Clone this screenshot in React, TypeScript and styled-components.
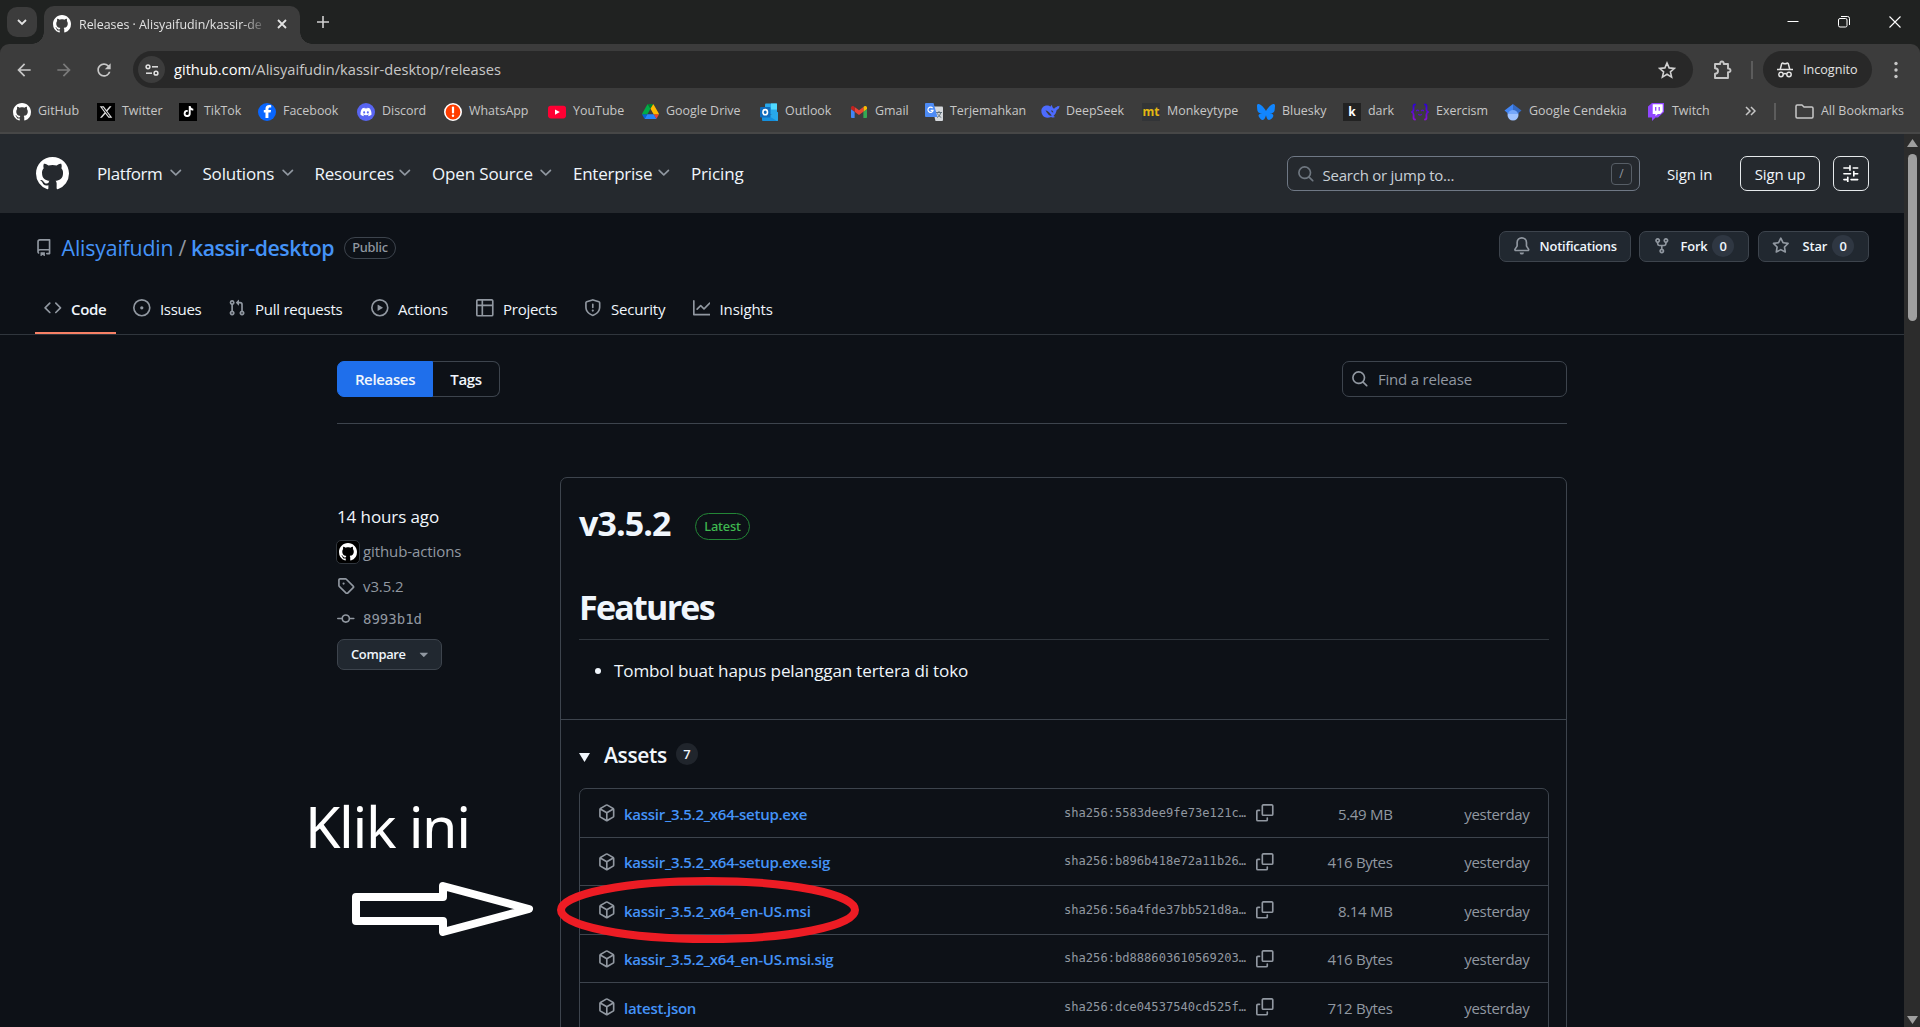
import React from "react";
import styled, { createGlobalStyle } from "styled-components";
import { FaXTwitter, FaTiktok, FaFacebookF, FaDiscord } from "react-icons/fa6";
import { MdArrowBack, MdArrowForward, MdRefresh } from "react-icons/md";

const c = {
  canvas: "#0d1117",
  text: "#f0f6fc",
  muted: "#9198a1",
  border: "#3d444d",
  borderMuted: "#30363d",
  link: "#4493f8",
  button: "#212830",
};

const Global = createGlobalStyle`
  * { box-sizing: border-box; }
  html, body { margin: 0; height: 100%; overflow: hidden; background: ${c.canvas}; }
  body { font-family: "Open Sans", "Noto Sans", sans-serif; color: ${c.text}; }
  svg { display: block; flex: none; }
`;

/* ---------- octicons ---------- */

const paths = {
  mark: "M8 0c4.42 0 8 3.58 8 8a8.013 8.013 0 0 1-5.45 7.59c-.4.08-.55-.17-.55-.38 0-.27.01-1.13.01-2.2 0-.75-.25-1.23-.54-1.48 1.78-.2 3.65-.88 3.65-3.95 0-.88-.31-1.59-.82-2.15.08-.2.36-1.02-.08-2.12 0 0-.67-.22-2.2.82-.64-.18-1.32-.27-2-.27-.68 0-1.36.09-2 .27-1.53-1.03-2.2-.82-2.2-.82-.44 1.1-.16 1.92-.08 2.12-.51.56-.82 1.28-.82 2.15 0 3.06 1.86 3.75 3.64 3.95-.23.2-.44.55-.51 1.07-.46.21-1.61.55-2.33-.66-.15-.24-.6-.83-1.23-.82-.67.01-.27.38.01.53.34.19.73.9.82 1.13.16.45.68 1.31 2.69.94 0 .67.01 1.3.01 1.49 0 .21-.15.45-.55.38A7.995 7.995 0 0 1 0 8c0-4.42 3.58-8 8-8Z",
  chevron: "M12.78 5.22a.749.749 0 0 1 0 1.06l-4.25 4.25a.749.749 0 0 1-1.06 0L3.22 6.28a.749.749 0 1 1 1.06-1.06L8 8.939l3.72-3.719a.749.749 0 0 1 1.06 0Z",
  search: "M10.68 11.74a6 6 0 0 1-7.922-8.982 6 6 0 0 1 8.982 7.922l3.04 3.04a.749.749 0 0 1-.326 1.275.749.749 0 0 1-.734-.215ZM11.5 7a4.499 4.499 0 1 0-8.997 0A4.499 4.499 0 0 0 11.5 7Z",
  sliders: "M15 2.75a.75.75 0 0 1-.75.75h-4a.75.75 0 0 1 0-1.5h4a.75.75 0 0 1 .75.75Zm-8.5.75v1.25a.75.75 0 0 0 1.5 0v-4a.75.75 0 0 0-1.5 0V2H1.75a.75.75 0 0 0 0 1.5H6.5Zm1.25 5.25a.75.75 0 0 0 0-1.5h-6a.75.75 0 0 0 0 1.5h6ZM15 8a.75.75 0 0 1-.75.75H11.5V10a.75.75 0 1 1-1.5 0V6a.75.75 0 0 1 1.5 0v1.25h2.75A.75.75 0 0 1 15 8Zm-9 5.25v-2a.75.75 0 0 0-1.5 0v1.25H1.75a.75.75 0 0 0 0 1.5H4.5v1.25a.75.75 0 0 0 1.5 0v-2Zm9 0a.75.75 0 0 1-.75.75h-6a.75.75 0 0 1 0-1.5h6a.75.75 0 0 1 .75.75Z",
  repo: "M2 2.5A2.5 2.5 0 0 1 4.5 0h8.75a.75.75 0 0 1 .75.75v12.5a.75.75 0 0 1-.75.75h-2.5a.75.75 0 0 1 0-1.5h1.75v-2h-8a1 1 0 0 0-.714 1.7.75.75 0 1 1-1.072 1.05A2.495 2.495 0 0 1 2 11.5Zm10.5-1h-8a1 1 0 0 0-1 1v6.708A2.486 2.486 0 0 1 4.5 9h8ZM5 12.25a.25.25 0 0 1 .25-.25h3.5a.25.25 0 0 1 .25.25v3.25a.25.25 0 0 1-.4.2l-1.45-1.087a.249.249 0 0 0-.3 0L5.4 15.7a.25.25 0 0 1-.4-.2Z",
  code: "m11.28 3.22 4.25 4.25a.75.75 0 0 1 0 1.06l-4.25 4.25a.749.749 0 0 1-1.275-.326.749.749 0 0 1 .215-.734L13.94 8l-3.72-3.72a.749.749 0 0 1 .326-1.275.749.749 0 0 1 .734.215Zm-6.56 0a.751.751 0 0 1 1.042.018.751.751 0 0 1 .018 1.042L2.06 8l3.72 3.72a.749.749 0 0 1-.326 1.275.749.749 0 0 1-.734-.215L.47 8.53a.75.75 0 0 1 0-1.06Z",
  issue: "M8 9.5a1.5 1.5 0 1 0 0-3 1.5 1.5 0 0 0 0 3ZM8 0a8 8 0 1 1 0 16A8 8 0 0 1 8 0ZM1.5 8a6.5 6.5 0 1 0 13 0 6.5 6.5 0 0 0-13 0Z",
  pull: "M1.5 3.25a2.25 2.25 0 1 1 3 2.122v5.256a2.251 2.251 0 1 1-1.5 0V5.372A2.25 2.25 0 0 1 1.5 3.25Zm5.677-.177L9.573.677A.25.25 0 0 1 10 .854V2.5h1A2.5 2.5 0 0 1 13.5 5v5.628a2.251 2.251 0 1 1-1.5 0V5a1 1 0 0 0-1-1h-1v1.646a.25.25 0 0 1-.427.177L7.177 3.427a.25.25 0 0 1 0-.354ZM3.75 2.5a.75.75 0 1 0 0 1.5.75.75 0 0 0 0-1.5Zm0 9.5a.75.75 0 1 0 0 1.5.75.75 0 0 0 0-1.5Zm8.25.75a.75.75 0 1 0 1.5 0 .75.75 0 0 0-1.5 0Z",
  play: "M8 0a8 8 0 1 1 0 16A8 8 0 0 1 8 0ZM1.5 8a6.5 6.5 0 1 0 13 0 6.5 6.5 0 0 0-13 0Zm4.879-2.773 4.264 2.559a.25.25 0 0 1 0 .428l-4.264 2.559A.25.25 0 0 1 6 10.559V5.442a.25.25 0 0 1 .379-.215Z",
  table: "M0 1.75C0 .784.784 0 1.75 0h12.5C15.216 0 16 .784 16 1.75v12.5A1.75 1.75 0 0 1 14.25 16H1.75A1.75 1.75 0 0 1 0 14.25ZM6.5 6.5v8h7.75a.25.25 0 0 0 .25-.25V6.5Zm8-1.5V1.75a.25.25 0 0 0-.25-.25H6.5V5Zm-13 1.5v7.75c0 .138.112.25.25.25H5v-8ZM5 5V1.5H1.75a.25.25 0 0 0-.25.25V5Z",
  shield: "M7.467.133a1.748 1.748 0 0 1 1.066 0l5.25 1.68A1.75 1.75 0 0 1 15 3.48V7c0 1.566-.32 3.182-1.303 4.682-.983 1.498-2.585 2.813-5.032 3.855a1.697 1.697 0 0 1-1.33 0c-2.447-1.042-4.049-2.357-5.032-3.855C1.32 10.182 1 8.566 1 7V3.48a1.75 1.75 0 0 1 1.217-1.667Zm.61 1.429a.25.25 0 0 0-.153 0l-5.25 1.68a.25.25 0 0 0-.174.238V7c0 1.358.275 2.666 1.057 3.86.784 1.194 2.121 2.34 4.366 3.297a.196.196 0 0 0 .154 0c2.245-.956 3.582-2.104 4.366-3.298C13.225 9.666 13.5 8.36 13.5 7V3.48a.251.251 0 0 0-.174-.237l-5.25-1.68ZM8.75 4.75v3a.75.75 0 0 1-1.5 0v-3a.75.75 0 0 1 1.5 0ZM9 10.5a1 1 0 1 1-2 0 1 1 0 0 1 2 0Z",
  graph: "M1.5 1.75V13.5h13.75a.75.75 0 0 1 0 1.5H.75a.75.75 0 0 1-.75-.75V1.75a.75.75 0 0 1 1.5 0Zm14.28 2.53-5.25 5.25a.75.75 0 0 1-1.06 0L7 7.06 4.28 9.78a.751.751 0 0 1-1.042-.018.751.751 0 0 1-.018-1.042l3.25-3.25a.75.75 0 0 1 1.06 0L10 7.94l4.72-4.72a.751.751 0 0 1 1.042.018.751.751 0 0 1 .018 1.042Z",
  bell: "M8 16a2 2 0 0 0 1.985-1.75c.017-.137-.097-.25-.235-.25h-3.5c-.138 0-.252.113-.235.25A2 2 0 0 0 8 16ZM3 5a5 5 0 0 1 10 0v2.947c0 .05.015.098.042.139l1.703 2.555A1.519 1.519 0 0 1 13.482 13H2.518a1.516 1.516 0 0 1-1.263-2.36l1.703-2.554A.255.255 0 0 0 3 7.947Zm5-3.5A3.5 3.5 0 0 0 4.5 5v2.947c0 .346-.102.683-.294.97l-1.703 2.556a.017.017 0 0 0-.003.01l.001.006c0 .002.002.004.004.006l.006.004.007.001h10.964l.007-.001.006-.004.004-.006.001-.007a.017.017 0 0 0-.003-.01l-1.703-2.554a1.745 1.745 0 0 1-.294-.97V5A3.5 3.5 0 0 0 8 1.5Z",
  fork: "M5 5.372v.878c0 .414.336.75.75.75h4.5a.75.75 0 0 0 .75-.75v-.878a2.25 2.25 0 1 1 1.5 0v.878a2.25 2.25 0 0 1-2.25 2.25h-1.5v2.128a2.251 2.251 0 1 1-1.5 0V8.5h-1.5A2.25 2.25 0 0 1 3.5 6.25v-.878a2.25 2.25 0 1 1 1.5 0ZM5 3.25a.75.75 0 1 0-1.5 0 .75.75 0 0 0 1.5 0Zm6.75.75a.75.75 0 1 0 0-1.5.75.75 0 0 0 0 1.5Zm-3 8.75a.75.75 0 1 0-1.5 0 .75.75 0 0 0 1.5 0Z",
  star: "M8 .25a.75.75 0 0 1 .673.418l1.882 3.815 4.21.612a.75.75 0 0 1 .416 1.279l-3.046 2.97.719 4.192a.751.751 0 0 1-1.088.791L8 12.347l-3.766 1.98a.75.75 0 0 1-1.088-.79l.72-4.194L.818 6.374a.75.75 0 0 1 .416-1.28l4.21-.611L7.327.668A.75.75 0 0 1 8 .25Zm0 2.445L6.615 5.5a.75.75 0 0 1-.564.41l-3.097.45 2.24 2.184a.75.75 0 0 1 .216.664l-.528 3.084 2.769-1.456a.75.75 0 0 1 .698 0l2.77 1.456-.53-3.084a.75.75 0 0 1 .216-.664l2.24-2.183-3.096-.45a.75.75 0 0 1-.564-.41L8 2.694Z",
  tag: "M1 7.775V2.75C1 1.784 1.784 1 2.75 1h5.025c.464 0 .91.184 1.238.513l6.25 6.25a1.75 1.75 0 0 1 0 2.474l-5.026 5.026a1.75 1.75 0 0 1-2.474 0l-6.25-6.25A1.752 1.752 0 0 1 1 7.775Zm1.5 0c0 .066.026.13.073.177l6.25 6.25a.25.25 0 0 0 .354 0l5.025-5.025a.25.25 0 0 0 0-.354l-6.25-6.25a.25.25 0 0 0-.177-.073H2.75a.25.25 0 0 0-.25.25ZM6 5a1 1 0 1 1 0 2 1 1 0 0 1 0-2Z",
  commit: "M11.93 8.5a4.002 4.002 0 0 1-7.86 0H.75a.75.75 0 0 1 0-1.5h3.32a4.002 4.002 0 0 1 7.86 0h3.32a.75.75 0 0 1 0 1.5Zm-1.43-.75a2.5 2.5 0 1 0-5 0 2.5 2.5 0 0 0 5 0Z",
  box: "m8.878.392 5.25 3.045c.54.314.872.89.872 1.514v6.098a1.75 1.75 0 0 1-.872 1.514l-5.25 3.045a1.75 1.75 0 0 1-1.756 0l-5.25-3.045A1.75 1.75 0 0 1 1 11.049V4.951c0-.624.332-1.201.872-1.514L7.122.392a1.75 1.75 0 0 1 1.756 0ZM7.875 1.69l-4.63 2.685L8 7.133l4.755-2.758-4.63-2.685a.248.248 0 0 0-.25 0ZM2.5 5.677v5.372c0 .09.047.171.125.216l4.625 2.683V8.432Zm6.25 8.271 4.625-2.683a.25.25 0 0 0 .125-.216V5.677L8.75 8.432Z",
  copy: "M0 6.75C0 5.784.784 5 1.75 5h1.5a.75.75 0 0 1 0 1.5h-1.5a.25.25 0 0 0-.25.25v7.5c0 .138.112.25.25.25h7.5a.25.25 0 0 0 .25-.25v-1.5a.75.75 0 0 1 1.5 0v1.5A1.75 1.75 0 0 1 9.25 16h-7.5A1.75 1.75 0 0 1 0 14.25ZM5 1.75C5 .784 5.784 0 6.75 0h7.5C15.216 0 16 .784 16 1.75v7.5A1.75 1.75 0 0 1 14.25 11h-7.5A1.75 1.75 0 0 1 5 9.25Zm1.75-.25a.25.25 0 0 0-.25.25v7.5c0 .138.112.25.25.25h7.5a.25.25 0 0 0 .25-.25v-7.5a.25.25 0 0 0-.25-.25Z",
  triangle: "m4.427 7.427 3.396 3.396a.25.25 0 0 0 .354 0l3.396-3.396A.25.25 0 0 0 11.396 7H4.604a.25.25 0 0 0-.177.427Z",
};

function Octicon({ name, size = 17.6, color = c.muted }: { name: keyof typeof paths; size?: number; color?: string }) {
  return (
    <svg width={size} height={size} viewBox="0 0 16 16" fill={color}>
      <path d={paths[name]} />
    </svg>
  );
}

/* ---------- browser chrome ---------- */

const Window = styled.div`
  display: flex;
  flex-direction: column;
  width: 1920px;
  height: 1027px;
  overflow: hidden;
  position: relative;
`;

const TabStrip = styled.div`
  display: flex;
  height: 44px;
  padding-left: 7px;
  background: #202221;
`;

const TabSearch = styled.div`
  display: grid;
  place-items: center;
  width: 30px;
  height: 30px;
  margin: 7px 7px 0 0;
  border-radius: 10px;
  background: #3c3c3c;
`;

const BrowserTab = styled.div`
  display: flex;
  align-items: center;
  width: 256px;
  height: 38px;
  margin-top: 6px;
  padding: 0 11px 2px 9px;
  border-radius: 10px 10px 0 0;
  background: #3c3c3c;
  position: relative;
  &::before, &::after {
    content: "";
    position: absolute;
    bottom: 0;
    width: 12px;
    height: 12px;
  }
  &::before { left: -12px; background: radial-gradient(circle at 0 0, transparent 11.5px, #3c3c3c 12px); }
  &::after { right: -12px; background: radial-gradient(circle at 100% 0, transparent 11.5px, #3c3c3c 12px); }
`;

const TabTitle = styled.div`
  width: 186px;
  margin-left: 8px;
  white-space: nowrap;
  font-size: 12.4px;
  color: #e3e3e3;
  mask-image: linear-gradient(to right, #000 162px, transparent 190px);
`;

const TabClose = styled.div`
  margin-left: auto;
`;

const NewTab = styled.div`
  margin: 15px 0 0 16px;
`;

const WindowButtons = styled.div`
  display: flex;
  align-items: center;
  gap: 39px;
  margin-left: auto;
  padding-right: 19px;
`;

const ChromeBody = styled.div`
  height: 90px;
  background: #202221;
  border-bottom: 2px solid #474747;
`;

const ChromeInner = styled.div`
  height: 88px;
  border-radius: 9px 9px 0 0;
  background: #3c3c3c;
`;

const Toolbar = styled.div`
  display: flex;
  align-items: center;
  height: 51px;
  padding: 0 17px 0 14px;
  color: #c7c7c7;
`;

const NavButton = styled.div<{ $dim?: boolean }>`
  width: 40px;
  opacity: ${(p) => (p.$dim ? 0.45 : 1)};
`;

const AddressBar = styled.div`
  display: flex;
  align-items: center;
  width: 1560px;
  height: 37px;
  margin-left: -1px;
  padding: 0 17px 0 5px;
  border-radius: 19px;
  background: #282828;
`;

const SiteInfo = styled.div`
  display: grid;
  place-items: center;
  width: 27px;
  height: 27px;
  border-radius: 50%;
  background: #3c3c3c;
`;

const Url = styled.div`
  flex: 1;
  margin-left: 9px;
  padding-bottom: 1px;
  font-size: 14.65px;
  color: #c7c7c7;
  & > span { color: #fff; }
`;

const ExtensionSlot = styled.div`
  margin-left: 19px;
`;

const ToolbarDivider = styled.div`
  width: 2px;
  height: 18px;
  margin-left: 18px;
  background: #5c5c5c;
`;

const Incognito = styled.div`
  display: flex;
  align-items: center;
  gap: 10px;
  width: 109px;
  height: 37px;
  margin: 0 auto 0 10px;
  padding-left: 14px;
  border-radius: 19px;
  background: #282828;
  font-size: 12.6px;
  color: #e3e3e3;
`;

const Bookmarks = styled.div`
  display: flex;
  align-items: center;
  height: 32px;
  padding-left: 13px;
  font-size: 12.45px;
  color: #c7c7c7;
`;

const Bookmark = styled.div<{ $w: number }>`
  display: flex;
  align-items: center;
  gap: 7px;
  width: ${(p) => p.$w}px;
  padding-bottom: 1px;
  white-space: nowrap;
  & > :first-child { position: relative; top: 1px; }
`;

const Favicon = styled.div<{ $bg?: string; $round?: boolean; $fg?: string }>`
  display: grid;
  place-items: center;
  flex: none;
  width: 18px;
  height: 18px;
  border-radius: ${(p) => (p.$round ? "50%" : "0")};
  background: ${(p) => p.$bg || "transparent"};
  color: ${(p) => p.$fg || "#fff"};
  font-size: 12px;
  font-weight: 700;
  line-height: 1;
`;

const MoreBookmarks = styled.div`
  width: 29px;
`;

const BookmarkDivider = styled.div`
  width: 2px;
  height: 17px;
  margin-right: 19px;
  background: #5c5c5c;
`;

function DriveIcon() {
  return (
    <svg width="17" height="15" viewBox="0 0 87.3 78">
      <path d="m6.6 66.85 3.85 6.65c.8 1.4 1.95 2.5 3.3 3.3l13.75-23.8h-27.5c0 1.55.4 3.1 1.2 4.5z" fill="#0066da" />
      <path d="m43.65 25-13.75-23.8c-1.35.8-2.5 1.9-3.3 3.3l-25.4 44a9.06 9.06 0 0 0-1.2 4.5h27.5z" fill="#00ac47" />
      <path d="m73.55 76.8c1.35-.8 2.5-1.9 3.3-3.3l1.6-2.75 7.65-13.25c.8-1.4 1.2-2.95 1.2-4.5h-27.5l5.85 11.5z" fill="#ea4335" />
      <path d="m43.65 25 13.75-23.8c-1.35-.8-2.9-1.2-4.5-1.2h-18.5c-1.6 0-3.15.45-4.5 1.2z" fill="#00832d" />
      <path d="m59.8 53h-32.3l-13.75 23.8c1.35.8 2.9 1.2 4.5 1.2h50.8c1.6 0 3.15-.45 4.5-1.2z" fill="#2684fc" />
      <path d="m73.4 26.5-12.7-22c-.8-1.4-1.95-2.5-3.3-3.3l-13.75 23.8 16.15 28h27.45c0-1.55-.4-3.1-1.2-4.5z" fill="#ffba00" />
    </svg>
  );
}

function OutlookIcon() {
  return (
    <svg width="18" height="18" viewBox="0 0 18 18">
      <rect x="5" y="0.5" width="12" height="11" rx="1" fill="#28a8ea" />
      <rect x="11" y="0.5" width="6" height="6" fill="#50d9ff" />
      <path d="M2 9l8 4.5L18 9v8a1 1 0 0 1-1 1H3a1 1 0 0 1-1-1z" fill="#1490df" />
      <path d="M18 9v8a1 1 0 0 1-1 1L8 12.5z" fill="#28a8ea" />
      <rect x="0" y="4" width="10.5" height="10.5" rx="1" fill="#0f6cbd" />
      <ellipse cx="5.2" cy="9.2" rx="2.3" ry="2.6" fill="none" stroke="#fff" strokeWidth="1.6" />
    </svg>
  );
}

function GmailIcon() {
  return (
    <svg width="16" height="12" viewBox="52 42 88 66">
      <path fill="#4285f4" d="M58 108h14V74L52 59v43c0 3.32 2.69 6 6 6" />
      <path fill="#34a853" d="M120 108h14c3.32 0 6-2.69 6-6V59l-20 15" />
      <path fill="#fbbc04" d="M120 48v26l20-15v-8c0-7.42-8.47-11.65-14.4-7.2" />
      <path fill="#ea4335" d="M72 74V48l24 18 24-18v26L96 92" />
      <path fill="#c5221f" d="M52 51v8l20 15V48l-5.6-4.2c-5.94-4.45-14.4-.22-14.4 7.2" />
    </svg>
  );
}

function TranslateIcon() {
  return (
    <svg width="18" height="18" viewBox="0 0 18 18">
      <path d="M7 3.5h10a1 1 0 0 1 1 1V17a1 1 0 0 1-1 1h-6.5z" fill="#d5d8dc" />
      <path d="M11 9.5h6M14 8v1.5M12 14.5c2-1 3.3-2.8 3.7-5M12.5 10.5c.7 1.7 2 3 3.8 4" stroke="#5f6f7a" strokeWidth="1" fill="none" />
      <path d="M1 0h7.5l4 14H1a1 1 0 0 1-1-1V1a1 1 0 0 1 1-1z" fill="#4d8bf5" />
      <path d="M7.6 5.2A2.6 2.6 0 1 0 8.1 7.3H5.6" stroke="#fff" strokeWidth="1.2" fill="none" />
    </svg>
  );
}

function DeepSeekIcon() {
  return (
    <svg width="19" height="15" viewBox="0 0 19 15">
      <path
        d="M.3 6.5C.6 3.5 3 1.300 6 1.400c1.500 0 2.500.5 3.700 1.200.3-.8.500-1.400 1.300-1.200.2 1.600 1 2.700 2.200 3.400.5-1.600 1.600-1 2.600-2 .6-.7 2-.6 2.700-1-.2 2-.8 3.600-2.800 4.200-.5 2.500-1.500 4.600-3.300 6 .6.400 1.200.7 1.700 1.100-1.500.8-3 .4-4-.2C6.500 14.400 3 13.700 1.500 11A7.500 7.500 0 0 1 .3 6.500z"
        fill="#4d6bfe"
      />
      <path d="M4.5 6.2c2.6.7 4.6 2.6 6.2 5.2-1.5.7-2.8-.2-3.7-1.5C6 8.700 5.200 7.600 4.500 6.200zM10.200 6.200c1.300.2 2 1 2.200 2.200-1.100.2-2-.6-2.200-2.200z" fill="#3c3c3c" />
    </svg>
  );
}

function BlueskyIcon() {
  return (
    <svg width="18" height="18" viewBox="0 0 24 24" fill="#1185fe">
      <path d="M12 10.8c-1.087-2.114-4.046-6.053-6.798-7.995C2.566.944 1.561 1.266.902 1.565.139 1.908 0 3.08 0 3.768c0 .69.378 5.65.624 6.479.815 2.736 3.713 3.66 6.383 3.364-3.912.58-7.387 2.005-2.83 7.078 5.013 5.19 6.87-1.113 7.823-4.308.953 3.195 2.05 9.271 7.733 4.308 4.267-4.308 1.172-6.498-2.74-7.078 2.67.297 5.568-.628 6.383-3.364.246-.828.624-5.79.624-6.478 0-.69-.139-1.861-.902-2.206-.659-.298-1.664-.62-4.3 1.24C16.046 4.748 13.087 8.687 12 10.8Z" />
    </svg>
  );
}

function ExercismIcon() {
  return (
    <svg width="18" height="18" viewBox="0 0 18 18" fill="none" strokeWidth="1.8" strokeLinecap="round">
      <defs>
        <linearGradient id="exercism" x1="0" y1="0" x2="0" y2="1">
          <stop offset="0" stopColor="#2e00d8" />
          <stop offset="1" stopColor="#8b0fd6" />
        </linearGradient>
      </defs>
      <path d="M4 1.5C2 1.5 2.6 4 2.6 6S2 8.600 1 9c1 .4 1.600 1 1.600 3S2 16.500 4 16.500M14 1.500c2 0 1.400 2.500 1.400 4.500S16 8.600 17 9c-1 .4-1.600 1-1.600 3s.6 4.500-1.400 4.500" stroke="url(#exercism)" />
      <path d="M5.5 7.8c.5-1 1.7-1 2.1 0M10.400 7.800c.5-1 1.700-1 2.100 0M7.600 11.500c.8.800 2 .800 2.800 0" stroke="#5a0bd0" strokeWidth="1.2" />
    </svg>
  );
}

function ScholarIcon() {
  return (
    <svg width="18" height="18" viewBox="0 0 18 18">
      <circle cx="9" cy="12" r="5.5" fill="#a0c3ff" />
      <path d="M4 9.5C5 7.700 6.800 6.500 9 6.500s4 1.200 5 3l.4 1.500H3.600z" fill="#76a7fa" />
      <path d="M9 1L.5 7.500 4 10.400C4.800 8.500 6.800 7 9 7z" fill="#4285f4" />
      <path d="M9 1l8.500 6.500L14 10.400C13.200 8.500 11.200 7 9 7z" fill="#356ac3" />
    </svg>
  );
}

function TwitchIcon() {
  return (
    <svg width="18" height="18" viewBox="0 0 18 18">
      <path d="M5 0L1 3.500v11h4V18l3.500-3.500H11l6-5.500V0z" fill="#9146ff" />
      <path d="M5.700 1.300h10v7.200l-2.400 2.400h-2.500l-2.300 2.200v-2.200H5.700z" fill="#fff" />
      <path d="M8.700 4v3.700M12.200 4v3.700" stroke="#9146ff" strokeWidth="1.3" />
    </svg>
  );
}

const bookmarks: { label: string; w: number; icon: React.ReactNode }[] = [
  { label: "GitHub", w: 84, icon: <Favicon><Octicon name="mark" size={18} color="#fff" /></Favicon> },
  { label: "Twitter", w: 82, icon: <Favicon $bg="#000" $fg="#ddd"><FaXTwitter size={14} /></Favicon> },
  { label: "TikTok", w: 79, icon: <Favicon $bg="#000"><FaTiktok size={11} /></Favicon> },
  { label: "Facebook", w: 99, icon: <Favicon $bg="#0866ff" $round><FaFacebookF size={13} /></Favicon> },
  { label: "Discord", w: 87, icon: <Favicon $bg="#5865f2" $round><FaDiscord size={12} /></Favicon> },
  {
    label: "WhatsApp", w: 104,
    icon: (
      <svg width="18" height="18" viewBox="0 0 18 18">
        <circle cx="9" cy="9" r="8.2" fill="#ff3d00" stroke="#fff" strokeWidth="1.6" />
        <path d="M9 4.500v5" stroke="#fff" strokeWidth="2.2" strokeLinecap="round" />
        <circle cx="9" cy="12.8" r="1.2" fill="#fff" />
      </svg>
    ),
  },
  {
    label: "YouTube", w: 93,
    icon: (
      <svg width="18" height="18" viewBox="0 0 18 18">
        <rect y="2.8" width="18" height="12.6" rx="2.8" fill="#ff0033" />
        <path d="M7 6.400v5.400l4.800-2.700z" fill="#fff" />
      </svg>
    ),
  },
  { label: "Google Drive", w: 119, icon: <Favicon><DriveIcon /></Favicon> },
  { label: "Outlook", w: 90, icon: <OutlookIcon /> },
  { label: "Gmail", w: 75, icon: <Favicon><GmailIcon /></Favicon> },
  { label: "Terjemahkan", w: 116, icon: <TranslateIcon /> },
  { label: "DeepSeek", w: 101, icon: <Favicon><DeepSeekIcon /></Favicon> },
  { label: "Monkeytype", w: 115, icon: <Favicon $bg="#323437" $fg="#e2b714">mt</Favicon> },
  { label: "Bluesky", w: 86, icon: <BlueskyIcon /> },
  { label: "dark", w: 68, icon: <Favicon $bg="#222"><span>k</span></Favicon> },
  { label: "Exercism", w: 93, icon: <ExercismIcon /> },
  { label: "Google Cendekia", w: 143, icon: <ScholarIcon /> },
  { label: "Twitch", w: 98, icon: <TwitchIcon /> },
];

/* ---------- page ---------- */

const Viewport = styled.div`
  display: flex;
  flex: 1;
  min-height: 0;
`;

const Page = styled.div`
  flex: 1;
  min-width: 0;
  overflow: hidden;
  background: ${c.canvas};
`;

const ScrollTrack = styled.div`
  display: flex;
  flex-direction: column;
  align-items: center;
  width: 16px;
  padding: 5px 0 3px;
  background: #2c2c2c;
`;

const ScrollThumb = styled.div`
  width: 9px;
  height: 167px;
  margin: 7px 0 auto 1px;
  border-radius: 5px;
  background: #9f9f9f;
`;

const SiteHeader = styled.header`
  display: flex;
  align-items: center;
  height: 79px;
  padding: 0 35px 0 36px;
  background: #25292e;
  & > svg { margin-top: -1px; }
`;

const SiteNav = styled.nav`
  display: flex;
  flex: 1;
  margin-left: 28px;
`;

const SiteNavItem = styled.div<{ $w?: number; $ls: number }>`
  display: flex;
  align-items: center;
  justify-content: space-between;
  width: ${(p) => (p.$w ? p.$w + "px" : "auto")};
  padding-right: 18px;
  padding-bottom: 1px;
  font-size: 17px;
  letter-spacing: ${(p) => p.$ls}px;
  white-space: nowrap;
`;

const SearchBox = styled.div`
  display: flex;
  align-items: center;
  width: 353px;
  height: 35px;
  padding: 0 7px 0 9px;
  border: 1px solid #6f7885;
  border-radius: 7px;
`;

const SearchHint = styled.span`
  flex: 1;
  margin: 2px 0 0 8px;
  font-size: 15px;
  letter-spacing: -0.25px;
  color: #c9d0d7;
`;

const KeyCap = styled.span`
  display: grid;
  place-items: center;
  width: 21px;
  height: 22px;
  border: 1px solid #575e66;
  border-radius: 4px;
  font-size: 12px;
  color: #9198a1;
`;

const SignIn = styled.a`
  width: 100px;
  padding-left: 27px;
  font-size: 15px;
  letter-spacing: -0.15px;
  white-space: nowrap;
`;

const OutlineButton = styled.a<{ $w: number }>`
  display: grid;
  place-items: center;
  width: ${(p) => p.$w}px;
  height: 35px;
  border: 1px solid #e6e9ec;
  border-radius: 7px;
  font-size: 15px;
  letter-spacing: -0.15px;
  & + & { margin-left: 13px; }
`;

const RepoHeader = styled.div`
  display: flex;
  align-items: center;
  height: 69px;
  padding: 0 35px 0 35px;
`;

const RepoName = styled.div`
  display: flex;
  align-items: baseline;
  margin-left: 9px;
  font-size: 21.3px;
  letter-spacing: -0.18px;
  color: ${c.link};
`;

const Slash = styled.span`
  margin: 0 5px 0 5px;
  color: ${c.muted};
`;

const RepoBold = styled.strong`
  font-weight: 600;
  letter-spacing: -0.5px;
`;

const PublicSlot = styled.div`
  margin-left: 10px;
`;

const Pill = styled.span<{ $latest?: boolean }>`
  display: grid;
  place-items: center;
  height: ${(p) => (p.$latest ? 27 : 22)}px;
  width: ${(p) => (p.$latest ? 55 : 52)}px;
  padding-bottom: ${(p) => (p.$latest ? 1 : 0)}px;
  border: 1px solid ${(p) => (p.$latest ? "#238636" : c.border)};
  border-radius: 14px;
  font-family: "Noto Sans", sans-serif;
  font-size: 12.8px;
  font-weight: 500;
  letter-spacing: -0.2px;
  line-height: 17px;
  color: ${(p) => (p.$latest ? "#3fb950" : c.muted)};
`;

const RepoActions = styled.div`
  display: flex;
  margin-left: auto;
  padding-bottom: 2px;
`;

const ActionButton = styled.div<{ $w: number; $gap: number; $ml?: number }>`
  display: flex;
  align-items: center;
  width: ${(p) => p.$w}px;
  height: 31px;
  margin-left: ${(p) => p.$ml || 0}px;
  padding: 0 14px 1px 13px;
  border: 1px solid ${c.border};
  border-radius: 7px;
  background: ${c.button};
  font-size: 12.9px;
  font-weight: 600;
  letter-spacing: -0.2px;
  & > svg { margin-right: ${(p) => p.$gap}px; margin-top: 0; }
`;

const Counter = styled.span<{ $bg?: string }>`
  display: grid;
  place-items: center;
  min-width: 22px;
  height: 22px;
  margin-left: auto;
  border-radius: 11px;
  background: ${(p) => p.$bg || "#2f3742"};
  font-size: 12.9px;
  font-weight: 600;
`;

const RepoTabs = styled.nav`
  display: flex;
  gap: 0;
  height: 53px;
  padding-left: 35px;
  border-bottom: 1px solid ${c.borderMuted};
`;

const RepoTab = styled.div<{ $w: number; $active?: boolean; $ls: number }>`
  width: ${(p) => p.$w}px;
  font-size: 15px;
  font-weight: ${(p) => (p.$active ? 600 : 400)};
  letter-spacing: ${(p) => p.$ls}px;
`;

const RepoTabInner = styled.div<{ $active?: boolean }>`
  display: flex;
  align-items: center;
  gap: 9.4px;
  width: ${(p) => (p.$active ? "81px" : "auto")};
  height: 52px;
  padding: 4px 0 0 9px;
  border-bottom: 2px solid ${(p) => (p.$active ? "#f78166" : "transparent")};
  white-space: nowrap;
  & > svg { margin-top: -2px; }
`;

const Content = styled.main`
  width: 1230px;
  margin-left: 337px;
`;

const Subnav = styled.div`
  display: flex;
  justify-content: space-between;
  padding: 26px 0;
  border-bottom: 1px solid ${c.border};
`;

const Segmented = styled.div`
  display: flex;
  font-size: 15px;
  font-weight: 600;
  letter-spacing: -0.35px;
`;

const Segment = styled.div<{ $w: number; $active?: boolean }>`
  display: grid;
  place-items: center;
  width: ${(p) => p.$w}px;
  height: 36px;
  border: 1px solid ${(p) => (p.$active ? "#1f6feb" : c.border)};
  border-left-width: ${(p) => (p.$active ? 1 : 0)}px;
  border-radius: ${(p) => (p.$active ? "7px 0 0 7px" : "0 7px 7px 0")};
  background: ${(p) => (p.$active ? "#1f6feb" : "transparent")};
`;

const FindBox = styled.div`
  display: flex;
  align-items: center;
  gap: 9.4px;
  width: 225px;
  height: 36px;
  padding-left: 8px;
  border: 1px solid ${c.border};
  border-radius: 7px;
  font-size: 15px;
  letter-spacing: -0.2px;
  color: ${c.muted};
`;

const Release = styled.div`
  display: flex;
  margin-top: 53px;
`;

const Meta = styled.aside`
  width: 223px;
  padding-top: 25px;
`;

const PublishedAt = styled.div`
  height: 30px;
  line-height: 30px;
  font-size: 17px;
  letter-spacing: -0.1px;
`;

const MetaRow = styled.div<{ $h: number; $mono?: boolean }>`
  display: flex;
  align-items: center;
  gap: 8.4px;
  height: ${(p) => p.$h}px;
  padding-top: ${(p) => (p.$mono ? 2 : 0)}px;
  font-family: ${(p) => (p.$mono ? '"DejaVu Sans Mono", monospace' : "inherit")};
  font-size: ${(p) => (p.$mono ? 14 : 15)}px;
  letter-spacing: ${(p) => (p.$mono ? 0 : -0.1)}px;
  color: ${c.muted};
`;

const Avatar = styled.span`
  display: grid;
  place-items: center;
  width: 24px;
  height: 24px;
  margin: 2px -5.4px 0 -1px;
  border: 1px solid #30363d;
  border-radius: 5px;
  background: #000;
`;

const CompareButton = styled.div`
  display: flex;
  align-items: center;
  gap: 9px;
  width: 105px;
  height: 31px;
  margin-top: 5px;
  padding: 0 0 1px 13px;
  border: 1px solid ${c.border};
  border-radius: 7px;
  background: ${c.button};
  font-size: 12.9px;
  font-weight: 600;
  letter-spacing: -0.3px;
`;

const Card = styled.section`
  width: 1007px;
  height: 700px;
  border: 1px solid ${c.border};
  border-radius: 7px;
`;

const ReleaseNotes = styled.div`
  height: 242px;
  padding: 19px 17px 0 18px;
  border-bottom: 1px solid ${c.border};
`;

const TitleRow = styled.div`
  display: flex;
  align-items: center;
  gap: 23px;
  height: 52px;
`;

const Version = styled.h1`
  width: 93px;
  margin: 0;
  white-space: nowrap;
  font-size: 34px;
  font-weight: 700;
  letter-spacing: -0.9px;
`;

const PillSlot = styled.div`
  padding-top: 7px;
`;

const NotesHeading = styled.h2`
  display: flex;
  align-items: center;
  height: 65px;
  margin: 26px 0 0;
  border-bottom: 1px solid ${c.borderMuted};
  font-size: 34px;
  font-weight: 700;
  letter-spacing: -1.75px;
`;

const NotesList = styled.ul`
  margin: 17px 0 0;
  padding-left: 35px;
  font-size: 17.1px;
  line-height: 27px;
  letter-spacing: -0.16px;
`;

const Assets = styled.div`
  padding: 0 17px 0 18px;
`;

const AssetsTitle = styled.div`
  display: flex;
  align-items: center;
  height: 68px;
  padding-top: 1px;
  font-size: 21px;
  font-weight: 600;
  letter-spacing: -0.35px;
  & > svg { margin: 5px 14px 0 0; }
`;

const CounterSlot = styled.span`
  margin: -1px 0 0 9px;
`;

const AssetList = styled.div`
  border: 1px solid ${c.border};
  border-radius: 7px 7px 0 0;
`;

const AssetRow = styled.div`
  display: flex;
  align-items: center;
  height: 48.5px;
  padding: 2px 18px 0 18px;
  border-bottom: 1px solid ${c.border};
  font-size: 15px;
  & > svg { margin-top: -1px; }
`;

const AssetName = styled.a`
  width: 440px;
  margin-left: 8.4px;
  font-weight: 600;
  letter-spacing: -0.26px;
  color: ${c.link};
`;

const Digest = styled.span`
  width: 192px;
  margin-top: -2px;
  font-family: "DejaVu Sans Mono", monospace;
  font-size: 12.1px;
  color: ${c.muted};
`;

const AssetCell = styled.span<{ $w: number }>`
  width: ${(p) => p.$w}px;
  text-align: right;
  letter-spacing: -0.3px;
  color: ${c.muted};
`;

/* ---------- hand-drawn annotations over the page ---------- */

const NoteText = styled.div`
  position: absolute;
  left: 305px;
  top: 786px;
  font-family: "Noto Sans", sans-serif;
  font-size: 57.4px;
  line-height: 80px;
  letter-spacing: -1.4px;
  color: #fff;
  white-space: nowrap;
`;

const NoteMarks = styled.svg`
  position: absolute;
  left: 340px;
  top: 870px;
`;

const assets = [
  ["kassir_3.5.2_x64-setup.exe", "sha256:5583dee9fe73e121c…", "5.49 MB"],
  ["kassir_3.5.2_x64-setup.exe.sig", "sha256:b896b418e72a11b26…", "416 Bytes"],
  ["kassir_3.5.2_x64_en-US.msi", "sha256:56a4fde37bb521d8a…", "8.14 MB"],
  ["kassir_3.5.2_x64_en-US.msi.sig", "sha256:bd888603610569203…", "416 Bytes"],
  ["latest.json", "sha256:dce04537540cd525f…", "712 Bytes"],
];

const siteNav: [string, number, number][] = [
  ["Platform", 105.5, -0.4],
  ["Solutions", 112, -0.2],
  ["Resources", 117.5, -0.25],
  ["Open Source", 141, -0.15],
  ["Enterprise", 118, -0.25],
  ["Pricing", 0, -0.15],
];

const repoTabs: [string, keyof typeof paths, number, number][] = [
  ["Code", "code", 89, -0.3],
  ["Issues", "issue", 95, -0.3],
  ["Pull requests", "pull", 143, -0.25],
  ["Actions", "play", 105, -0.2],
  ["Projects", "table", 108, -0.25],
  ["Security", "shield", 108.5, -0.2],
  ["Insights", "graph", 110, -0.1],
];

function Chrome() {
  return (
    <>
      <TabStrip>
        <TabSearch>
          <svg width="10" height="7" viewBox="0 0 10 7" fill="none" stroke="#e3e3e3" strokeWidth="1.8"><path d="M1 1l4 4 4-4" /></svg>
        </TabSearch>
        <BrowserTab>
          <Octicon name="mark" size={18} color="#fff" />
          <TabTitle>Releases · Alisyaifudin/kassir-de</TabTitle>
          <TabClose>
            <svg width="14" height="10" viewBox="0 0 14 10" stroke="#e3e3e3" strokeWidth="1.8"><path d="M3 1l8 8M11 1L3 9" /></svg>
          </TabClose>
        </BrowserTab>
        <NewTab>
          <svg width="14" height="14" viewBox="0 0 14 14" stroke="#d0d0d0" strokeWidth="1.6"><path d="M7 1v12M1 7h12" /></svg>
        </NewTab>
        <WindowButtons>
          <svg width="12" height="12" viewBox="0 0 12 12" stroke="#fff"><path d="M.5 5.500h11" /></svg>
          <svg width="12" height="12" viewBox="0 0 12 12" fill="none" stroke="#fff"><rect x=".5" y="2.5" width="8.5" height="8.5" rx="1.5" /><path d="M3 .5h6.500a2 2 0 0 1 2 2V9" /></svg>
          <svg width="12" height="12" viewBox="0 0 12 12" stroke="#fff" strokeWidth="1.1"><path d="M.5 .5l11 11M11.500 .5l-11 11" /></svg>
        </WindowButtons>
      </TabStrip>
      <ChromeBody>
        <ChromeInner>
          <Toolbar>
            <NavButton><MdArrowBack size={20} /></NavButton>
            <NavButton $dim><MdArrowForward size={20} /></NavButton>
            <NavButton><MdRefresh size={20} /></NavButton>
            <AddressBar>
              <SiteInfo>
                <svg width="14" height="12" viewBox="0 0 14 12" fill="none" stroke="#e3e3e3" strokeWidth="1.5">
                  <circle cx="3" cy="2.8" r="1.9" /><path d="M7 2.800h6" />
                  <circle cx="11" cy="9.2" r="1.9" /><path d="M1 9.200h6" />
                </svg>
              </SiteInfo>
              <Url><span>github.com</span>/Alisyaifudin/kassir-desktop/releases</Url>
              <svg width="18" height="18" viewBox="0 0 18 18" fill="none" stroke="#d0d0d0" strokeWidth="1.6"><path d="M9 2l2.100 4.900 5.300.5-4 3.500 1.200 5.200L9 13.300l-4.600 2.800 1.200-5.200-4-3.500 5.300-.5z" /></svg>
            </AddressBar>
            <ExtensionSlot>
              <svg width="21" height="20" viewBox="0 0 21 20" fill="none" stroke="#c7c7c7" strokeWidth="1.9" strokeLinejoin="round">
                <path d="M3 4h5.200c-.3-1.600.6-2.500 1.700-2.500S12 2.400 11.700 4H16v4.600c1.600-.2 2.500.7 2.500 1.800s-.9 2-2.500 1.800V18H3v-4.300c2.200 0 3-1.300 3-2.700S5.200 8.200 3 8.200z" />
              </svg>
            </ExtensionSlot>
            <ToolbarDivider />
            <Incognito>
              <svg width="16" height="16" viewBox="0 0 16 16" fill="none" stroke="#e3e3e3" strokeWidth="1.5">
                <path d="M0 7.500h16M3.300 7l1.400-5.200c.2-.7.800-.8 1.300-.6 1.300.6 2.700.6 4 0 .5-.2 1.100-.1 1.300.6L12.700 7" />
                <circle cx="4" cy="12.5" r="2.2" /><circle cx="12" cy="12.5" r="2.2" /><path d="M6.200 12.300c1-.8 2.600-.8 3.600 0" />
              </svg>
              Incognito
            </Incognito>
            <svg width="14" height="18" viewBox="0 0 14 18" fill="#c7c7c7"><circle cx="7" cy="2.5" r="1.7" /><circle cx="7" cy="9" r="1.7" /><circle cx="7" cy="15.5" r="1.7" /></svg>
          </Toolbar>
          <Bookmarks>
            {bookmarks.map((b) => (
              <Bookmark key={b.label} $w={b.w}>{b.icon}{b.label}</Bookmark>
            ))}
            <MoreBookmarks>
              <svg width="11" height="10" viewBox="0 0 11 10" fill="none" stroke="#c7c7c7" strokeWidth="1.5"><path d="M1 1l4 4-4 4M6 1l4 4-4 4" /></svg>
            </MoreBookmarks>
            <BookmarkDivider />
            <Bookmark $w={112}>
              <svg width="19" height="15" viewBox="0 0 19 15" fill="none" stroke="#c7c7c7" strokeWidth="1.5" strokeLinejoin="round"><path d="M1 12.800V2.200c0-.7.500-1.200 1.200-1.200h4.800l2 2h7.800c.7 0 1.200.5 1.200 1.200v8.600c0 .7-.5 1.200-1.200 1.200H2.200c-.7 0-1.200-.5-1.200-1.200z" /></svg>
              All Bookmarks
            </Bookmark>
          </Bookmarks>
        </ChromeInner>
      </ChromeBody>
    </>
  );
}

export default function App() {
  return (
    <Window>
      <Global />
      <Chrome />
      <Viewport>
        <Page>
          <SiteHeader>
            <Octicon name="mark" size={33} color="#fff" />
            <SiteNav>
              {siteNav.map(([label, w, ls]) => (
                <SiteNavItem key={label} $w={w} $ls={ls}>
                  {label}
                  {w > 0 && <Octicon name="chevron" />}
                </SiteNavItem>
              ))}
            </SiteNav>
            <SearchBox>
              <Octicon name="search" color="#6f7780" />
              <SearchHint>Search or jump to...</SearchHint>
              <KeyCap>/</KeyCap>
            </SearchBox>
            <SignIn>Sign in</SignIn>
            <OutlineButton $w={80}>Sign up</OutlineButton>
            <OutlineButton $w={36}><Octicon name="sliders" color="#fff" /></OutlineButton>
          </SiteHeader>
          <RepoHeader>
            <Octicon name="repo" />
            <RepoName>Alisyaifudin<Slash>/</Slash><RepoBold>kassir-desktop</RepoBold></RepoName>
            <PublicSlot><Pill>Public</Pill></PublicSlot>
            <RepoActions>
              <ActionButton $w={132} $gap={9}><Octicon name="bell" />Notifications</ActionButton>
              <ActionButton $w={110} $gap={10} $ml={8}><Octicon name="fork" />Fork<Counter>0</Counter></ActionButton>
              <ActionButton $w={111} $gap={13} $ml={9}><Octicon name="star" />Star<Counter>0</Counter></ActionButton>
            </RepoActions>
          </RepoHeader>
          <RepoTabs>
            {repoTabs.map(([label, icon, w, ls], i) => (
              <RepoTab key={label} $w={w} $ls={ls} $active={i === 0}>
                <RepoTabInner $active={i === 0}><Octicon name={icon} />{label}</RepoTabInner>
              </RepoTab>
            ))}
          </RepoTabs>
          <Content>
            <Subnav>
              <Segmented>
                <Segment $w={96} $active>Releases</Segment>
                <Segment $w={67}>Tags</Segment>
              </Segmented>
              <FindBox><Octicon name="search" />Find a release</FindBox>
            </Subnav>
            <Release>
              <Meta>
                <PublishedAt>14 hours ago</PublishedAt>
                <MetaRow $h={38}><Avatar><Octicon name="mark" size={18} color="#fff" /></Avatar>github-actions</MetaRow>
                <MetaRow $h={31}><Octicon name="tag" />v3.5.2</MetaRow>
                <MetaRow $h={33} $mono><Octicon name="commit" />8993b1d</MetaRow>
                <CompareButton>Compare<Octicon name="triangle" /></CompareButton>
              </Meta>
              <Card>
                <ReleaseNotes>
                  <TitleRow>
                    <Version>v3.5.2</Version>
                    <PillSlot><Pill $latest>Latest</Pill></PillSlot>
                  </TitleRow>
                  <NotesHeading>Features</NotesHeading>
                  <NotesList><li>Tombol buat hapus pelanggan tertera di toko</li></NotesList>
                </ReleaseNotes>
                <Assets>
                  <AssetsTitle>
                    <svg width="11" height="9" viewBox="0 0 11 9" fill={c.text}><path d="M0 0h11L5.500 9z" /></svg>
                    Assets
                    <CounterSlot><Counter $bg="#20252c">7</Counter></CounterSlot>
                  </AssetsTitle>
                  <AssetList>
                    {assets.map(([name, sha, size]) => (
                      <AssetRow key={name}>
                        <Octicon name="box" />
                        <AssetName>{name}</AssetName>
                        <Digest>{sha}</Digest>
                        <Octicon name="copy" />
                        <AssetCell $w={119}>{size}</AssetCell>
                        <AssetCell $w={137}>yesterday</AssetCell>
                      </AssetRow>
                    ))}
                  </AssetList>
                </Assets>
              </Card>
            </Release>
          </Content>
        </Page>
        <ScrollTrack>
          <svg width="11" height="8" viewBox="0 0 11 8" fill="#9f9f9f"><path d="M5.500 0L11 8H0z" /></svg>
          <ScrollThumb />
          <svg width="11" height="8" viewBox="0 0 11 8" fill="#9f9f9f"><path d="M5.500 8L11 0H0z" /></svg>
        </ScrollTrack>
      </Viewport>
      <NoteText>Klik ini</NoteText>
      <NoteMarks width="530" height="80" viewBox="340 870 530 80" fill="none" strokeWidth="8">
        <path d="M356 897H443V886L529 909L443 932V921H356Z" stroke="#fff" strokeLinejoin="round" />
        <ellipse cx="708" cy="910" rx="147" ry="29" stroke="#ed1c24" />
      </NoteMarks>
    </Window>
  );
}
